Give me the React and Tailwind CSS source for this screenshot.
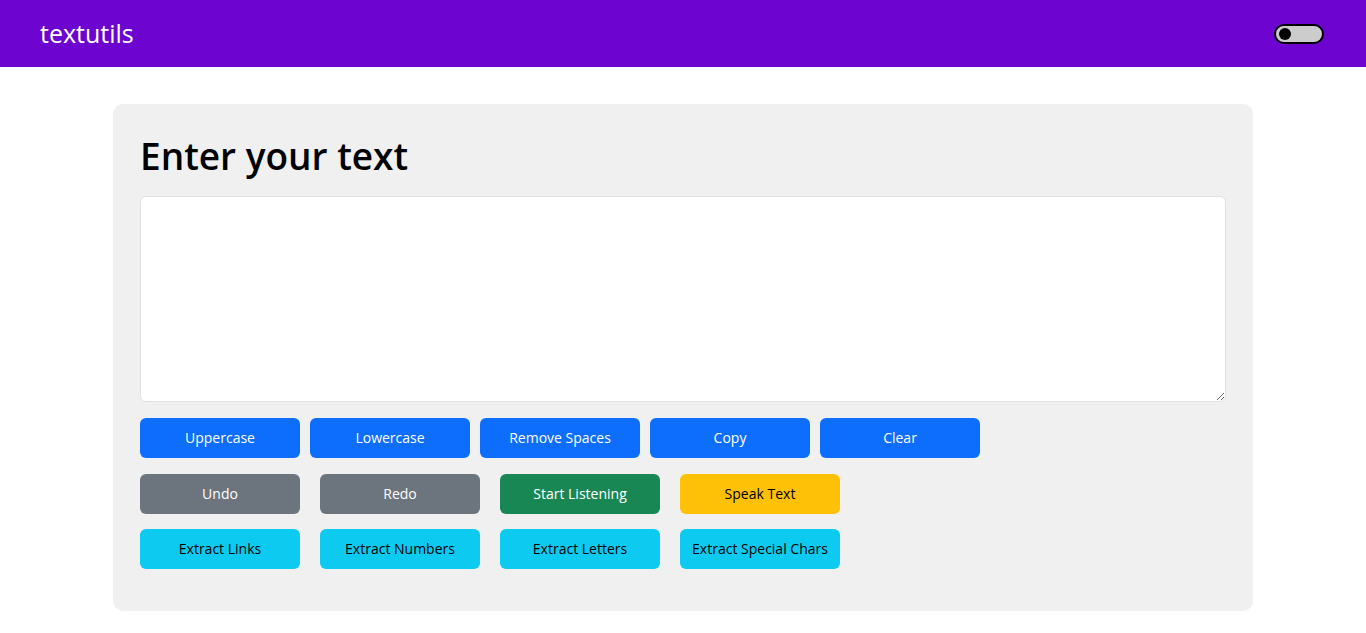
import React, { useState } from 'react';

const rowOne = ['Uppercase', 'Lowercase', 'Remove Spaces', 'Copy', 'Clear'];

const rowTwo = [
  { label: 'Undo', cls: 'bg-[#6c757d] text-white' },
  { label: 'Redo', cls: 'bg-[#6c757d] text-white' },
  { label: 'Start Listening', cls: 'bg-[#198754] text-white' },
  { label: 'Speak Text', cls: 'bg-[#ffc107] text-black' },
];

const rowThree = ['Extract Links', 'Extract Numbers', 'Extract Letters', 'Extract Special Chars'];

const Btn = ({ children, className }) => (
  <button className={`w-40 h-10 rounded-md text-sm flex items-center justify-center ${className}`}>
    {children}
  </button>
);

export default function App() {
  const [text, setText] = useState('');
  const [dark, setDark] = useState(false);

  return (
    <div className="w-screen min-h-[1000px] bg-white font-['Open_Sans','Noto_Sans',sans-serif] text-[#212529]">
      <nav className="h-[67px] bg-[#6d04cf] flex items-center justify-between pl-10 pr-[42px]">
        <span className="text-white text-[25px]">textutils</span>
        <button
          onClick={() => setDark(!dark)}
          className="w-[50px] h-5 rounded-full border-2 border-black bg-[#cccccc] flex items-center px-[3px]"
        >
          <span className="w-3 h-3 rounded-full bg-black block" />
        </button>
      </nav>

      <div className="w-[1140px] mx-auto mt-[37px] bg-[#f0f0f0] rounded-[10px] px-[27px] pt-[30px] pb-[42px]">
        <h1 className="text-[37px] leading-[1.2] font-semibold text-black mb-[18px]">Enter your text</h1>
        <textarea
          value={text}
          onChange={(e) => setText(e.target.value)}
          className="block w-full h-[206px] bg-white border border-[#dee2e6] rounded-md p-3 outline-none"
        />

        <div className="flex gap-[10px] mt-4">
          {rowOne.map((l) => (
            <Btn key={l} className="bg-[#0d6efd] text-white">{l}</Btn>
          ))}
        </div>

        <div className="flex gap-5 mt-4">
          {rowTwo.map((b) => (
            <Btn key={b.label} className={b.cls}>{b.label}</Btn>
          ))}
        </div>

        <div className="flex gap-5 mt-[15px]">
          {rowThree.map((l) => (
            <Btn key={l} className="bg-[#0dcaf0] text-black">{l}</Btn>
          ))}
        </div>
      </div>
    </div>
  );
}
